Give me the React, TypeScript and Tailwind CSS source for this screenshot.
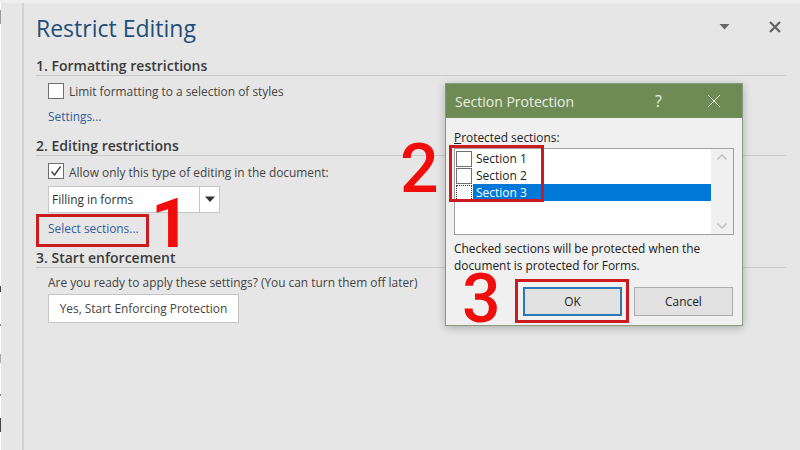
import React from "react";

const font = { fontFamily: '"Open Sans", "Noto Sans", sans-serif' };
const numFont = { fontFamily: 'Roboto, "Liberation Sans", sans-serif' };

function Heading({ children }: { children: React.ReactNode }) {
  return (
    <div className="h-[20px] border-b border-[#c9c9c9] box-content">
      <div className="text-[14px] leading-[20px] font-semibold text-[#3a3a3a] translate-y-[1px]">{children}</div>
    </div>
  );
}

function Check({ checked, dotted }: { checked?: boolean; dotted?: boolean }) {
  return (
    <div className={`w-[16px] h-[16px] bg-white border ${dotted ? "border-dotted border-[#333]" : "border-[#6e6e6e]"} shrink-0 flex items-center justify-center`}>
      {checked && (
        <svg width="14" height="14" viewBox="0 0 14 14" fill="none">
          <path d="M2.5 7.5 L5.5 11 L11.5 2.5" stroke="#444" strokeWidth="1.4" />
        </svg>
      )}
    </div>
  );
}

function Row({ label, selected, dotted }: { label: string; selected?: boolean; dotted?: boolean }) {
  return (
    <div className="h-[17px] flex items-center gap-[1px]">
      <Check dotted={dotted} />
      <div className={`flex-1 h-[17px] pl-[3px] text-[12px] leading-[17px] ${selected ? "bg-[#0078d7] text-white" : "text-[#222]"}`}>{label}</div>
    </div>
  );
}

export default function App() {
  return (
    <div className="relative w-[800px] h-[450px] overflow-hidden bg-[#e6e6e6]" style={font}>
      <div className="h-[3px] bg-[#efefef]" />
      <div className="flex h-[447px]">
        <div className="w-[1px] bg-white flex flex-col">
          <div className="mt-[7px] h-[14px] bg-[#999]" />
          <div className="mt-[262px] h-[6px] bg-[#444]" />
          <div className="mt-[32px] h-[2px] bg-[#888]" />
          <div className="mt-[28px] h-[9px] bg-[#aaa]" />
          <div className="mt-[31px] h-[2px] bg-[#888]" />
          <div className="mt-[22px] h-[14px] bg-[#444]" />
        </div>
        <div className="w-[21px]" />
        <div className="w-[2px] bg-[#d2d2d2]" />
        <div className="flex-1 pl-[12px] pr-[14px] text-[11.9px] text-[#444]">
          <div className="flex items-center h-[48px]">
            <div className="text-[23px] leading-[32px] text-[#1f4e79] translate-y-[1px]">Restrict Editing</div>
            <div className="flex-1" />
            <svg width="12" height="8" viewBox="0 0 12 8" className="mr-[38px]">
              <path d="M0.5 1 H10.5 L5.5 6.5 Z" fill="#666" />
            </svg>
            <svg width="12" height="12" viewBox="0 0 12 12" className="mr-[5px]">
              <path d="M1 1 L11 11 M11 1 L1 11" stroke="#666" strokeWidth="2.4" />
            </svg>
          </div>
          <div className="mt-[4px]">
            <Heading>1. Formatting restrictions</Heading>
          </div>
          <div className="pl-[12px] mt-[7px] flex items-center gap-[5px] h-[16px]">
            <Check />
            <span className="leading-[16px]">Limit formatting to a selection of styles</span>
          </div>
          <div className="pl-[12px] mt-[9px] h-[16px] leading-[16px] text-[#2f5f9e]">Settings...</div>
          <div className="mt-[11px]">
            <Heading>2. Editing restrictions</Heading>
          </div>
          <div className="pl-[12px] mt-[7px] flex items-center gap-[5px] h-[16px]">
            <Check checked />
            <span className="leading-[16px] translate-y-[1px]">Allow only this type of editing in the document:</span>
          </div>
          <div className="ml-[12px] mt-[7px] w-[172px] h-[27px] bg-white border border-[#c6c6c6] flex">
            <div className="flex-1 pl-[3px] leading-[25px] text-[#333]">Filling in forms</div>
            <div className="w-[20px] border-l border-[#c6c6c6] flex items-center justify-center">
              <svg width="12" height="7" viewBox="0 0 12 7">
                <path d="M1 0.5 H11 L6 6 Z" fill="#333" />
              </svg>
            </div>
          </div>
          <div className="pl-[12px] mt-[7px] h-[16px] leading-[16px] text-[#2f5f9e]">Select sections...</div>
          <div className="mt-[11px]">
            <Heading>3. Start enforcement</Heading>
          </div>
          <div className="pl-[12px] mt-[6px] h-[16px] leading-[16px]">Are you ready to apply these settings? (You can turn them off later)</div>
          <div className="ml-[12px] mt-[4px] w-[191px] h-[29px] bg-white border border-[#c6c6c6] flex items-center justify-center text-[#444]">
            Yes, Start Enforcing Protection
          </div>
        </div>
      </div>

      {/* Dialog */}
      <div className="absolute left-[445px] top-[83px] w-[298px] h-[243px] bg-[#f0f0f0] border border-[#8a9a7c] shadow-[0_2px_8px_rgba(0,0,0,0.25)] text-[11.9px] text-[#222]">
        <div className="h-[34px] bg-[#6f8b55] flex items-center pl-[9px] text-[#e8eee2] text-[14px]">
          <span>Section Protection</span>
          <div className="flex-1" />
          <span className="text-[16px] mr-[45px]">?</span>
          <svg width="14" height="14" viewBox="0 0 14 14" className="mr-[21px]">
            <path d="M1 1 L13 13 M13 1 L1 13" stroke="#e8eee2" strokeWidth="1" />
          </svg>
        </div>
        <div className="px-[8px]">
          <div className="h-[16px] mt-[11px] leading-[16px]">
            <span className="underline">P</span>rotected sections:
          </div>
          <div className="mt-[3px] h-[87px] bg-white border border-[#a0a0a0] flex">
            <div className="flex-1 pl-[1px] pt-[1px]">
              <Row label="Section 1" />
              <Row label="Section 2" />
              <Row label="Section 3" selected dotted />
            </div>
            <div className="w-[22px] bg-[#f0f0f0] flex flex-col justify-between items-center py-[5px]">
              <svg width="10" height="6" viewBox="0 0 10 6">
                <path d="M0.5 5.5 L5 1 L9.5 5.5" stroke="#c4c4c4" strokeWidth="1.6" fill="none" />
              </svg>
              <svg width="10" height="6" viewBox="0 0 10 6">
                <path d="M0.5 0.5 L5 5 L9.5 0.5" stroke="#c4c4c4" strokeWidth="1.6" fill="none" />
              </svg>
            </div>
          </div>
          <div className="mt-[5px] leading-[17px]">
            Checked sections will be protected when the
            <br />
            document is protected for Forms.
          </div>
          <div className="mt-[13px] pr-[1px] flex justify-end gap-[12px]">
            <div className="w-[99px] h-[29px] bg-[#e1e1e1] border-2 border-[#2a78b8] flex items-center justify-center">OK</div>
            <div className="w-[99px] h-[29px] bg-[#e1e1e1] border border-[#adadad] flex items-center justify-center">Cancel</div>
          </div>
        </div>
      </div>

      {/* Red annotations */}
      <div className="absolute left-[36px] top-[214px] w-[113px] h-[33px] border-[3px] border-[#cb1a20]" />
      <div className="absolute left-[449px] top-[145px] w-[95px] h-[57px] border-[3px] border-[#cb1a20]" />
      <div className="absolute left-[515px] top-[279px] w-[114px] h-[44px] border-[3px] border-[#cb1a20]" />
      <div className="absolute left-[151px] top-[186px] text-[68px] leading-[76px] font-bold text-[#f20d0d]" style={numFont}>1</div>
      <div className="absolute left-[400px] top-[131px] text-[68px] leading-[76px] font-medium text-[#f20d0d]" style={numFont}>2</div>
      <div className="absolute left-[462px] top-[261px] text-[68px] leading-[76px] font-medium text-[#f20d0d]" style={numFont}>3</div>
    </div>
  );
}
